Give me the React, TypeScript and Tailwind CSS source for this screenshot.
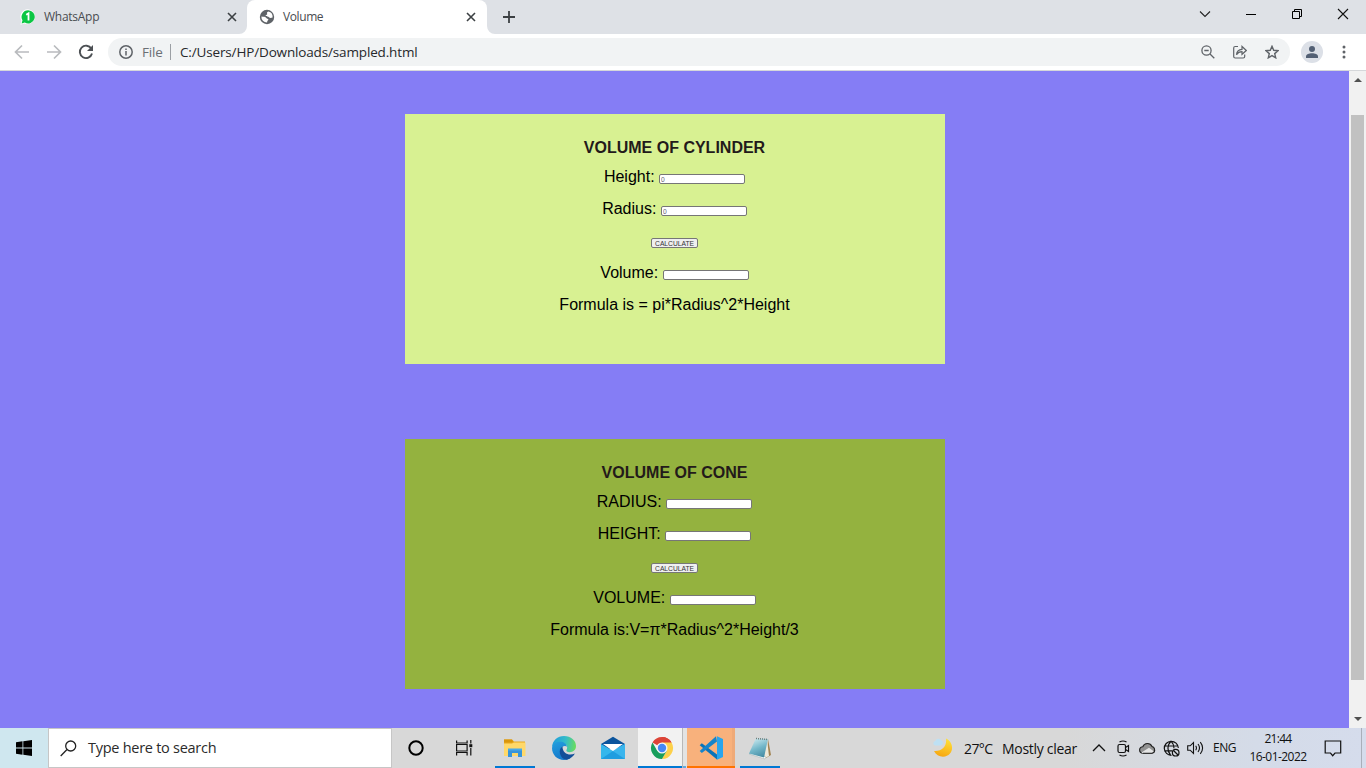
import React from "react";

const ui = "font-['Open_Sans','Noto_Sans',sans-serif]";

function Close({ className }: { className: string }) {
  return (
    <svg className={className} viewBox="0 0 10 10" fill="none" stroke="#3c4043" strokeWidth="1.6">
      <path d="M1 1l8 8M9 1L1 9" />
    </svg>
  );
}

function TabStrip() {
  return (
    <div className="flex h-[34px] w-full bg-[#dee1e6]">
      <div className="flex w-[247px] items-center pl-[20px]">
        <svg className="h-[16px] w-[16px]" viewBox="0 0 16 16">
          <path d="M8 .3a7.5 7.5 0 1 1-3.6 14.3L.4 15.7l1.1-4A7.5 7.5 0 0 1 8 .3z" fill="#fff" />
          <path d="M8.1 1.3a6.6 6.6 0 1 1-3.3 12.3l-3.2.9.9-3.2A6.6 6.6 0 0 1 8.1 1.3z" fill="#0bc644" />
          <path d="M6.2 5.7l2.3-1.3V11.4" fill="none" stroke="#fff" strokeWidth="1.8" />
        </svg>
        <span className="ml-[8px] w-[183px] whitespace-nowrap text-[12px] tracking-[-0.27px] text-[#494c50]">WhatsApp</span>
        <Close className="h-[10px] w-[10px]" />
      </div>
      <div className="relative flex w-[240px] items-center rounded-t-[8px] bg-white pl-[12px]">
        <svg className="absolute bottom-0 left-[-8px] h-[8px] w-[8px]" viewBox="0 0 8 8"><path d="M8 0v8H0A8 8 0 0 0 8 0z" fill="#fff" /></svg>
        <svg className="absolute right-[-8px] bottom-0 h-[8px] w-[8px]" viewBox="0 0 8 8"><path d="M0 0v8h8A8 8 0 0 1 0 0z" fill="#fff" /></svg>
        <svg className="h-[16px] w-[16px]" viewBox="0 0 16 16">
          <circle cx="8" cy="8" r="7.2" fill="#5f6368" />
          <path d="M9.300 2.500C8 3 7.600 4 8.300 4.900 8.200 6 6.500 5.600 6.600 6.900 7.500 7.800 9.300 7 10 8.200c.6 1.200 2.300.8 3.600.4A5.700 5.700 0 0 0 9.300 2.500z" fill="#fff" />
          <path d="M2.400 7.500c2 .2 4.300.2 5 1.500.3.900 1.800.4 2 1.400.1.900-1.500 1-1.300 3.200A5.600 5.600 0 0 1 2.400 7.500z" fill="#fff" />
        </svg>
        <span className="ml-[8px] w-[183px] whitespace-nowrap text-[12px] tracking-[-0.4px] text-[#494c50]">Volume</span>
        <Close className="h-[10px] w-[10px]" />
      </div>
      <svg className="mt-[11px] ml-[16px] h-[12px] w-[12px]" viewBox="0 0 12 12" stroke="#3c4043" strokeWidth="1.8"><path d="M6 0v12M0 6h12" /></svg>
      <div className="ml-auto flex h-[28px] items-center">
        <svg className="mr-[35px] h-[8px] w-[12px]" viewBox="0 0 12 8" fill="none" stroke="#222" strokeWidth="1.1"><path d="M1 1.500l5 5 5-5" /></svg>
        <span className="mt-[1px] mr-[36px] h-px w-[10px] bg-black" />
        <svg className="mr-[35px] h-[10px] w-[10px]" viewBox="0 0 10 10" fill="none" stroke="#000"><path d="M.5 2.500h7v7H.5zM2.500 2.500V.5h7v7h-2" /></svg>
        <svg className="mr-[17px] h-[12px] w-[12px]" viewBox="0 0 12 12" stroke="#111" strokeWidth="1.100"><path d="M1 1l10 10M11 1L1 11" /></svg>
      </div>
    </div>
  );
}

function Toolbar() {
  return (
    <div className="flex h-[37px] w-full items-center border-b border-[#d5d7da] bg-white pl-[14px]">
      <svg className="h-[16px] w-[16px]" viewBox="0 0 16 16" fill="none" stroke="#b9bbbe" strokeWidth="1.700"><path d="M15 8H2M8 1.500L1.500 8 8 14.500" /></svg>
      <svg className="ml-[16px] h-[16px] w-[16px]" viewBox="0 0 16 16" fill="none" stroke="#b9bbbe" strokeWidth="1.700"><path d="M1 8h13M8 1.500L14.500 8 8 14.500" /></svg>
      <svg className="ml-[16px] h-[16px] w-[16px]" viewBox="0 0 16 16"><path d="M13.300 4.600A6.200 6.200 0 1 0 14 9.500" fill="none" stroke="#4c5054" strokeWidth="1.900" /><path d="M15 1v6H9z" fill="#4c5054" /></svg>
      <div className="ml-[14px] flex h-[28px] w-[1182px] items-center rounded-full bg-[#f1f3f4] pl-[11px]">
        <svg className="h-[14px] w-[14px]" viewBox="0 0 14 14" fill="none" stroke="#5f6368" strokeWidth="1.500"><circle cx="7" cy="7" r="6.200" /><path d="M7 6v4.500M7 3.400V5" /></svg>
        <span className="mt-[1px] ml-[9px] w-[28px] text-[13.500px] tracking-[-0.2px] text-[#6b6f74]">File</span>
        <span className="h-[16px] w-px bg-[#9b9fa4]" />
        <span className="mt-[1px] ml-[9px] text-[13.500px] whitespace-nowrap tracking-[-0.150px] text-[#26282b]">C:/Users/HP/Downloads/sampled.html</span>
        <div className="mr-[11px] ml-auto flex items-center gap-[18px]">
          <svg className="h-[14px] w-[14px]" viewBox="0 0 14 14" fill="none" stroke="#5f6368" strokeWidth="1.300"><circle cx="5.500" cy="5.500" r="4.600" /><path d="M9 9l4.300 4.300M3.300 5.500h4.400" /></svg>
          <svg className="h-[14px] w-[14px]" viewBox="0 0 14 14" fill="none" stroke="#5f6368" strokeWidth="1.200"><path d="M5 1.500H2.200Q.700 1.500.700 3v8.500Q.700 13 2.200 13h8Q11.700 13 11.700 11.500V9.500" /><path d="M3.500 9.800C3.700 6.800 5.500 4.600 9 4.400V1.500l4.300 4L9 9.300V6.700C6.500 6.700 4.700 7.700 3.500 9.800z" /></svg>
          <svg className="h-[14px] w-[14px]" viewBox="0 0 14 14" fill="none" stroke="#5f6368" strokeWidth="1.400"><path d="M7 1.300l1.700 4 4.300.4-3.300 2.900 1 4.200L7 10.600l-3.700 2.200 1-4.200L1 5.700l4.300-.4z" /></svg>
        </div>
      </div>
      <div className="ml-[11px] flex h-[22px] w-[22px] items-center justify-center rounded-full bg-[#dce0e7]">
        <svg className="h-[12px] w-[12px]" viewBox="0 0 12 12" fill="#536074"><circle cx="6" cy="3" r="3" /><path d="M0 12V10.400C0 8.500 3 7.300 6 7.300s6 1.200 6 3.100V12z" /></svg>
      </div>
      <svg className="ml-[19px] h-[14px] w-[4px]" viewBox="0 0 4 14" fill="#5f6368"><circle cx="2" cy="2" r="1.500" /><circle cx="2" cy="7" r="1.500" /><circle cx="2" cy="12" r="1.500" /></svg>
    </div>
  );
}

function Field({ label, value = "" }: { label: string; value?: string }) {
  return (
    <div className="flex h-[32px] items-start justify-center text-[16px] leading-[18px] whitespace-nowrap">
      <span>{label}</span>
      <input
        placeholder={value}
        className="mt-[6px] ml-[4.500px] h-[10px] w-[86px] rounded-[2px] border border-[#767676] bg-white px-[1px] text-[6.700px] leading-[8px] placeholder:text-[#656575]"
      />
    </div>
  );
}

type CardProps = { title: string; fields: [string, string][]; result: string; formula: string; tone: string };

function Card({ title, fields, result, formula, tone }: CardProps) {
  return (
    <section className={`h-[250px] w-[540px] pt-[25px] text-center text-black ${tone}`}>
      <h1 className="mb-[11px] text-[16px] leading-[18px] font-bold text-[#231a1a]">{title}</h1>
      {fields.map(([label, value]) => (
        <Field key={label} label={label} value={value} />
      ))}
      <div className="flex h-[32px] justify-center pt-[6px]">
        <button className="h-[10px] w-[47px] rounded-[2px] border border-[#767676] bg-[#efefef] text-[6.700px] leading-[9px] text-[#333]">CALCULATE</button>
      </div>
      <Field label={result} />
      <p className="text-[16px] leading-[18px]">{formula}</p>
    </section>
  );
}

function Page() {
  return (
    <div className="flex h-[657px] w-full bg-[#857df5]">
      <main className="flex w-[1349px] flex-col items-center gap-[75px] pt-[43px] font-['Liberation_Sans',Arial,sans-serif]">
        <Card tone="bg-[#d8f192]" title="VOLUME OF CYLINDER" fields={[["Height:", "0"], ["Radius:", "0"]]} result="Volume:" formula="Formula is = pi*Radius^2*Height" />
        <Card tone="bg-[#94b23f]" title="VOLUME OF CONE" fields={[["RADIUS:", ""], ["HEIGHT:", ""]]} result="VOLUME:" formula="Formula is:V=π*Radius^2*Height/3" />
      </main>
      <div className="flex w-[17px] flex-col items-center bg-[#f1f1f1] pt-[7px]">
        <svg className="h-[4px] w-[8px]" viewBox="0 0 8 4"><path d="M0 4l4-4 4 4z" fill="#505050" /></svg>
        <div className="mt-[33px] h-[565px] w-[13px] bg-[#c1c1c1]" />
        <svg className="mt-[37px] h-[4px] w-[8px]" viewBox="0 0 8 4"><path d="M0 0l4 4 4-4z" fill="#505050" /></svg>
      </div>
    </div>
  );
}

function Folder() {
  return (
    <svg className="h-[24px] w-[24px]" viewBox="0 0 24 24">
      <path d="M1 3.500h8l2 2h11V20H1z" fill="#e9a91f" />
      <path d="M1 3.500h8l1 2-1 1H1z" fill="#d9960c" />
      <path d="M1 7.500h8l2-1h11.500V20H1z" fill="#ffd869" />
      <path d="M5 21v-8h14v8h-4v-4H9v4z" fill="#3794da" />
      <path d="M5 12.500h14v2H5z" fill="#4ba9e8" />
    </svg>
  );
}

function Edge() {
  return (
    <svg className="h-[24px] w-[24px]" viewBox="0 0 24 24">
      <defs>
        <linearGradient id="edgeTop" x1="0" y1=".4" x2="1" y2=".5"><stop stopColor="#1f9bdc" /><stop offset=".55" stopColor="#34bcc9" /><stop offset="1" stopColor="#69dd5c" /></linearGradient>
        <linearGradient id="edgeSide" x1="0" y1="0" x2=".4" y2="1"><stop stopColor="#249fde" /><stop offset="1" stopColor="#1478cb" /></linearGradient>
      </defs>
      <path d="M0 11C.500 4.500 5.500 0 12 0c7 0 12 4.500 12 10 0 4-3 6.200-6.200 6.200-2.600 0-4-1-3.300-2.200 1.700-3 .3-7-5-7C5 7 2 9 0 11z" fill="url(#edgeTop)" />
      <path d="M0 12c.8-4.300 4-6.200 8.200-6.200 3.500 0 6.300 2 6.800 5-1.500-1.800-5.800-.8-6.500 3.200 0 5 5.200 8.500 10.500 7.800-2 1.400-4.500 2.200-7 2.200C5.500 24 0 19 0 12z" fill="url(#edgeSide)" />
      <path d="M10.500 10.500C5.500 13 7.500 23 14.500 23.700c4-.8 7-3.500 8.400-6.200C17.500 20 10.500 18 10.500 10.500z" fill="#124f99" />
    </svg>
  );
}

function Mail() {
  return (
    <svg className="h-[24px] w-[24px]" viewBox="0 0 24 24">
      <path d="M0 8L12 .8 24 8v5H0z" fill="#0b549d" />
      <path d="M0 8l12 7 12-7v15H0z" fill="#35b7ec" />
      <path d="M24 8v15L12 15z" fill="#2092dc" />
      <path d="M0 23l12-8 12 8z" fill="#1f9de0" />
      <path d="M24 8v15L11 14.500z" fill="#39b5ed" />
      <path d="M2 8h20l-10 7z" fill="#fff" />
    </svg>
  );
}

function Chrome() {
  return (
    <svg className="h-[24px] w-[24px]" viewBox="0 0 24 24">
      <path d="M12 12L2.470 6.500A11 11 0 0 1 21.530 6.500z" fill="#dc4437" />
      <path d="M12 12V1a11 11 0 0 1 9.530 5.500H12z" fill="#dc4437" />
      <path d="M12 6.500h9.530A11 11 0 0 1 12 23l4.800-8.250z" fill="#fdd04a" />
      <path d="M2.470 6.500A11 11 0 0 0 12 23l4.760-8.250L7.200 14.700z" fill="#189e5b" />
      <circle cx="12" cy="12" r="5.500" fill="#f5f5f5" />
      <circle cx="12" cy="12" r="4.200" fill="#4587f4" />
    </svg>
  );
}

function Code() {
  return (
    <svg className="h-[24px] w-[24px]" viewBox="0 0 24 24">
      <path d="M.7 9.300L2.800 7.300 18 18.500V23.500z" fill="#0873b9" />
      <path d="M.7 15L17 .3l1 5.200L2.800 17z" fill="#1684ca" />
      <path d="M17.500 0L24 3v18l-6.500 3c.5-.4.500-.8.500-1.300V1.300c0-.6 0-.9-.5-1.300z" fill="#28a5ed" />
      <path d="M18 7v10l-6.500-5z" fill="#f8b17c" />
    </svg>
  );
}

function Notepad() {
  return (
    <svg className="h-[24px] w-[26px]" viewBox="0 0 26 24">
      <defs><linearGradient id="note" x1=".2" y1="0" x2=".6" y2="1"><stop stopColor="#d3edf2" /><stop offset=".55" stopColor="#73b7c9" /><stop offset="1" stopColor="#478da4" /></linearGradient></defs>
      <path d="M21 3l3 16-5 3z" fill="#a18353" />
      <path d="M20 3l2 17-5 2.500z" fill="#eee9d9" />
      <path d="M2 18l16 5 1-2-15-5z" fill="#f9fbfa" stroke="#9baaab" strokeWidth=".5" />
      <path d="M9 2l12 1-4 18.500L2 17.500z" fill="url(#note)" />
      <path d="M9 2.500l12 1" stroke="#737b78" strokeWidth="1.500" strokeDasharray="1 1" />
    </svg>
  );
}

function TaskButton({ children, line = "" }: { children: React.ReactNode; line?: string }) {
  return (
    <div className="flex h-[40px] w-[40px] flex-col items-center justify-end">
      <div className="flex h-[38px] items-start justify-center pt-[8px]">{children}</div>
      <div className={`h-[2px] w-full shrink-0 ${line}`} />
    </div>
  );
}

function Taskbar() {
  return (
    <footer className={`flex h-[40px] w-full bg-[linear-gradient(90deg,#d8d8d8_0%,#d8d8d8_78%,#d4dbe8_92%,#d5dcec_100%)] text-[#111] ${ui}`}>
      <div className="flex w-[48px] items-center justify-center bg-[#cfe7ef]">
        <svg className="h-[16px] w-[16px]" viewBox="0 0 16 16"><path d="M0 2.200L6.500 1.300V7.600H0zM7.300 1.200L16 0v7.600H7.300zM0 8.400h6.500v6.300L0 13.800zM7.300 8.400H16V16l-8.700-1.200z" /></svg>
      </div>
      <div className="flex w-[344px] items-center border border-[#c6c6c6] bg-white pl-[11px]">
        <svg className="h-[17px] w-[17px]" viewBox="0 0 17 17" fill="none" stroke="#222" strokeWidth="1.300"><circle cx="10.700" cy="6" r="5" /><path d="M7 9.500L.700 16" /></svg>
        <span className="ml-[11px] text-[14.500px] whitespace-nowrap tracking-[-0.270px] text-[#2b2b2b]">Type here to search</span>
      </div>
      <div className="ml-[4px] flex w-[95px] items-center">
        <svg className="ml-[12px] h-[16px] w-[16px]" viewBox="0 0 16 16" fill="none" stroke="#000" strokeWidth="2"><circle cx="8" cy="8" r="6.700" /></svg>
        <svg className="ml-[32px] h-[16px] w-[17px]" viewBox="0 0 17 16" fill="none" stroke="#111" strokeWidth="1.200"><path d="M.600.500V3h10.500V.500M.600 15.500V12.500h10.500v3M.600 4.500h10.500v6.500H.600zM14.800 0v3.500M14.800 8v7.500" /><path d="M13.300 4.200h3v3h-3z" fill="#111" stroke="none" /></svg>
      </div>
      <div className="ml-[4px] flex">
        <TaskButton line="bg-[#0078d4]"><Folder /></TaskButton>
        <span className="w-[9px]" />
        <TaskButton><Edge /></TaskButton>
        <span className="w-[9px]" />
        <TaskButton><Mail /></TaskButton>
      </div>
      <div className="ml-[5px] flex w-[45px] flex-col border-r border-[#b8b8b8] bg-[#f2f2f2]">
        <div className="flex h-[38px] justify-center pt-[8px] pl-[4px]"><Chrome /></div>
        <div className="h-[2px] bg-[#0078d4]" />
      </div>
      <div className="flex w-[4px] flex-col justify-end bg-[#e3e3e3]"><div className="mr-[1px] h-[2px] bg-[#68a9db]" /></div>
      <div className="flex w-[48px] flex-col bg-[#f8b17c]">
        <div className="flex h-[38px] justify-center border-r-[3px] border-[#efaa78] pt-[8px] pl-[3px]"><Code /></div>
        <div className="h-[2px] bg-[#ff7200]" />
      </div>
      <div className="ml-[5px] flex"><TaskButton line="bg-[#0078d4]"><Notepad /></TaskButton></div>
      <div className="ml-[152px] flex items-center">
        <svg className="h-[22px] w-[22px]" viewBox="0 0 22 22">
          <defs><linearGradient id="moon" x1=".8" y1="0" x2=".5" y2="1"><stop stopColor="#ffe33a" /><stop offset="1" stopColor="#f7a812" /></linearGradient></defs>
          <path d="M14 1.500c9 4 8 18-3 18.200-4 0-7-2-9-5.700C10.500 14.500 15 9 14 1.500z" fill="url(#moon)" />
          <path d="M3 8.500a2.300 2.300 0 0 1 .3-4.500 3.500 3.500 0 0 1 6.200-.5A2.700 2.700 0 0 1 9 8.500z" fill="#bee0f3" />
        </svg>
        <span className="ml-[10px] w-[38px] text-[14px] whitespace-nowrap tracking-[-0.6px]">27°C</span>
        <span className="w-[90px] text-[14px] whitespace-nowrap tracking-[-0.300px]">Mostly clear</span>
        <svg className="h-[8px] w-[14px]" viewBox="0 0 14 8" fill="none" stroke="#111" strokeWidth="1.300"><path d="M1 7l6-6 6 6" /></svg>
        <svg className="ml-[11px] h-[17px] w-[13px]" viewBox="0 0 13 17" fill="none" stroke="#111" strokeWidth="1.200"><rect x="1" y="4.500" width="7.500" height="8" rx="1.500" /><path d="M8.500 7.500L11.500 5.500v6L8.500 9.500M2.500 2Q6 0 9.500 2M2.500 15Q6 17 9.500 15" /></svg>
        <svg className="ml-[9px] h-[12px] w-[17px]" viewBox="0 0 17 12" fill="#929292" stroke="#222" strokeWidth="1.100"><path d="M4 11.300a3.300 3.300 0 0 1-.2-6.600A5 5 0 0 1 13 4.500a3.500 3.500 0 0 1-.2 6.800z" /><path d="M2.500 10.500L10 5.700 15 9.500Q14.500 11 13 11.300H4z" fill="#e5e5e5" stroke="none" /><path d="M4 11.300h8.800a3.500 3.500 0 0 0 3-3" fill="none" /></svg>
        <svg className="ml-[7px] h-[17px] w-[17px]" viewBox="0 0 17 17" fill="none" stroke="#111" strokeWidth="1.200"><path d="M8.500 15.300A7 7 0 1 1 15.300 8M1.200 6h13.300M1.200 10.800H9M7.500 15C4 11 4 5 8 1.200c2 2 3 4.500 3 7" /><circle cx="12.700" cy="12.700" r="3.300" /><path d="M10.500 10.500L15 15" /></svg>
        <svg className="ml-[7px] h-[14px] w-[17px]" viewBox="0 0 17 14" fill="none" stroke="#111" strokeWidth="1.100"><path d="M.700 4.800v4.400h2.500L6.500 12.500v-11L3.200 4.800zM8.700 4.800q1.500 2.200 0 4.400M11 3q3 4 0 8M13.300 1.200q4.600 5.800 0 11.600" /></svg>
        <span className="ml-[9px] w-[34px] text-[12px] tracking-[-0.500px]">ENG</span>
        <div className="flex w-[62px] flex-col items-center text-[12px] leading-[18px] whitespace-nowrap">
          <span className="tracking-[-0.700px]">21:44</span>
          <span className="tracking-[-0.550px]">16-01-2022</span>
        </div>
        <svg className="ml-[15px] h-[17px] w-[18px]" viewBox="0 0 18 17" fill="none" stroke="#111" strokeWidth="1.200"><path d="M1.200 1h15.500v12H11l-2.300 2.700L6.500 13H1.200z" /></svg>
      </div>
      <span className="ml-auto h-full w-[5px] border-l border-[#a9afba]" />
    </footer>
  );
}

export default function App() {
  return (
    <div className="h-[768px] w-[1366px] overflow-hidden">
      <header className={ui}>
        <TabStrip />
        <Toolbar />
      </header>
      <Page />
      <Taskbar />
    </div>
  );
}
